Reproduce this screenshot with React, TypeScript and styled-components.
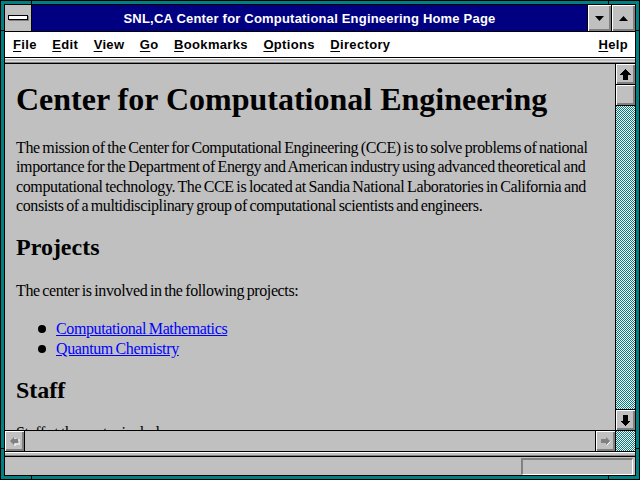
import React from "react";
import styled, { createGlobalStyle } from "styled-components";

const Global = createGlobalStyle`
  html, body { margin: 0; padding: 0; background: #008080; }
  * { box-sizing: border-box; }
`;

const Frame = styled.div`
  position: relative;
  width: 640px;
  height: 480px;
  background: #008080;
  border: 1px solid #000;
  padding: 3px;
`;

const Tick = styled.div<{ $v?: boolean }>`
  position: absolute;
  background: #000;
  ${(p) => (p.$v ? "width: 1px; height: 4px;" : "width: 4px; height: 1px;")}
`;

const Inner = styled.div`
  height: 100%;
  border: 1px solid #000;
  background: #c0c0c0;
  display: flex;
  flex-direction: column;
`;

const TitleBar = styled.div`
  height: 27px;
  display: flex;
  border-bottom: 1px solid #000;
  background: #000080;
`;

const SysBox = styled.div`
  width: 27px;
  background: #c0c0c0;
  border-right: 1px solid #000;
  display: flex;
  align-items: center;
  justify-content: center;
`;

const SysBar = styled.div`
  width: 20px;
  height: 5px;
  background: #fff;
  border: 1px solid #000;
  box-shadow: 1px 1px 0 #808080;
  margin-top: -1px;
`;

const Title = styled.div`
  flex: 1;
  color: #fff;
  font-family: "Liberation Sans", Arial, sans-serif;
  font-weight: bold;
  font-size: 13px;
  display: flex;
  align-items: center;
  justify-content: center;
  letter-spacing: 0.2px;
`;

const TitleBtn = styled.div`
  width: 24px;
  background: #c0c0c0;
  border-left: 1px solid #000;
  box-shadow: inset 1px 1px 0 #fff, inset -1px -1px 0 #808080, inset -2px -2px 0 #808080;
  display: flex;
  align-items: center;
  justify-content: center;
`;

const MenuBar = styled.div`
  height: 26px;
  background: #fff;
  border-bottom: 1px solid #000;
  display: flex;
  align-items: center;
  padding: 0 8px;
  gap: 15.5px;
  font-family: "Liberation Sans", Arial, sans-serif;
  font-weight: bold;
  font-size: 13px;
  letter-spacing: 0.33px;
  color: #000;
`;

const MenuItem = styled.span<{ $right?: boolean }>`
  margin-left: ${(p) => (p.$right ? "auto" : "0")};
  margin-right: ${(p) => (p.$right ? "-1px" : "0")};
  & u { text-decoration: underline; text-underline-offset: 2px; }
`;

const Separator = styled.div`
  height: 6px;
  border-top: 1px solid #fff;
  border-bottom: 1px solid #000;
  background: linear-gradient(#c0c0c0 0 2px, #dcdcdc 2px 3px, #808080 3px);
`;

const Main = styled.div`
  height: 366px;
  display: flex;
`;

const Content = styled.div`
  flex: 1;
  overflow: hidden;
  padding: 17px 0 0 11px;
  font-family: "Liberation Serif", "Times New Roman", serif;
  color: #000;
`;

const H1 = styled.h1`
  margin: 0 0 21px;
  font-size: 32px;
  line-height: 36px;
  font-weight: bold;
  white-space: nowrap;
`;

const H2 = styled.h2<{ $mt?: number }>`
  margin: ${(p) => p.$mt ?? 0}px 0 0;
  font-size: 24px;
  line-height: 28px;
  font-weight: bold;
`;

const bodyText = `
  font-size: 16px;
  letter-spacing: -0.38px;
  word-spacing: -1px;
`;

const P = styled.p<{ $mt?: number }>`
  margin: ${(p) => p.$mt ?? 0}px 0 0;
  ${bodyText}
  line-height: 19.4px;
  white-space: nowrap;
`;

const List = styled.ul`
  margin: 19px 0 17px;
  padding: 0 0 0 22px;
  list-style: none;
`;

const Li = styled.li`
  ${bodyText}
  line-height: 20px;
  display: flex;
  align-items: center;
  gap: 10px;
  &::before {
    content: "";
    width: 8px;
    height: 8px;
    border-radius: 50%;
    background: #000;
    margin-top: -1px;
  }
`;

const Link = styled.a`
  color: #0000ff;
  text-decoration: underline;
`;

const VScroll = styled.div`
  width: 20px;
  border-left: 1px solid #000;
  display: flex;
  flex-direction: column;
`;

const Dither = styled.svg`
  display: block;
  flex: 1;
  width: 100%;
  height: 100%;
  min-height: 0;
`;

const DitherFill = ({ id }: { id: string }) => (
  <Dither shapeRendering="crispEdges" preserveAspectRatio="none">
    <defs>
      <pattern id={id} width="2" height="2" patternUnits="userSpaceOnUse">
        <rect width="2" height="2" fill="#fff" />
        <rect width="1" height="1" fill="#008080" />
        <rect x="1" y="1" width="1" height="1" fill="#008080" />
      </pattern>
    </defs>
    <rect width="100%" height="100%" fill={`url(#${id})`} />
  </Dither>
);

const SBtn = styled.div<{ $top?: boolean; $bottom?: boolean; $left?: boolean; $right?: boolean; $w?: number; $h?: number }>`
  flex: none;
  width: ${(p) => (p.$w ? p.$w + "px" : "auto")};
  height: ${(p) => (p.$h ? p.$h + "px" : "auto")};
  background: #c0c0c0;
  box-shadow: inset 1px 1px 0 #fff, inset -1px -1px 0 #808080, inset -2px -2px 0 #808080;
  border-top: ${(p) => (p.$top ? "1px solid #000" : "none")};
  border-bottom: ${(p) => (p.$bottom ? "1px solid #000" : "none")};
  border-left: ${(p) => (p.$left ? "1px solid #000" : "none")};
  border-right: ${(p) => (p.$right ? "1px solid #000" : "none")};
  display: flex;
  align-items: center;
  justify-content: center;
`;

const HScroll = styled.div`
  height: 21px;
  border-top: 1px solid #000;
  display: flex;
`;

const HTrack = styled.div`
  flex: 1;
  background: #c0c0c0;
`;

const Corner = styled.div`
  width: 20px;
  border-left: 1px solid #000;
  display: flex;
`;

const StatusSep = styled.div`
  height: 6px;
  border-top: 1px solid #000;
  border-bottom: 1px solid #000;
  background: linear-gradient(#fff 0 1px, #c0c0c0 1px 3px, #808080 3px);
`;

const Status = styled.div`
  flex: 1;
  display: flex;
  justify-content: flex-end;
  align-items: center;
  padding-right: 2px;
`;

const StatusBox = styled.div`
  width: 112px;
  height: 17px;
  border-top: 2px solid #808080;
  border-left: 2px solid #808080;
  border-bottom: 1px solid #fff;
  border-right: 1px solid #fff;
  margin-top: 1px;
`;

const ArrowUp = () => (
  <svg width="11" height="11" viewBox="0 0 11 11" shapeRendering="crispEdges">
    <path d="M5.5 0 L11 5.5 L8 5.5 L8 11 L3 11 L3 5.5 L0 5.5 Z" fill="#000" />
  </svg>
);
const ArrowDown = () => (
  <svg width="11" height="11" viewBox="0 0 11 11" shapeRendering="crispEdges">
    <path d="M5.5 11 L11 5.5 L8 5.5 L8 0 L3 0 L3 5.5 L0 5.5 Z" fill="#000" />
  </svg>
);
const ArrowLeftG = () => (
  <svg width="11" height="10" viewBox="0 0 11 10">
    <path d="M5 1 L5 3 L10 3 L10 7 L5 7 L5 9" fill="none" stroke="#fff" strokeWidth="1" transform="translate(1,1)" />
    <path d="M5 1 L1 5 L5 9 L5 7 L9 7 L9 3 L5 3 Z" fill="#808080" />
  </svg>
);
const ArrowRightG = () => (
  <svg width="11" height="10" viewBox="0 0 11 10">
    <path d="M6 9 L10 5" stroke="#fff" strokeWidth="1" transform="translate(0.5,0.5)" />
    <path d="M6 1 L10 5 L6 9 L6 7 L1 7 L1 3 L6 3 Z" fill="#808080" />
  </svg>
);
const TriDown = () => (
  <svg width="9" height="5" viewBox="0 0 9 5">
    <path d="M0 0 L9 0 L4.5 5 Z" fill="#000" />
  </svg>
);
const TriUp = () => (
  <svg width="9" height="5" viewBox="0 0 9 5">
    <path d="M0 5 L9 5 L4.5 0 Z" fill="#000" />
  </svg>
);

export default function App() {
  return (
    <>
      <Global />
      <Frame>
        <Tick $v style={{ left: 30, top: 0 }} />
        <Tick $v style={{ left: 607, top: 0 }} />
        <Tick $v style={{ left: 30, bottom: 0 }} />
        <Tick $v style={{ left: 607, bottom: 0 }} />
        <Tick style={{ left: 0, top: 29 }} />
        <Tick style={{ right: 0, top: 29 }} />
        <Tick style={{ left: 0, top: 447 }} />
        <Tick style={{ right: 0, top: 447 }} />
        <Inner>
          <TitleBar>
            <SysBox>
              <SysBar />
            </SysBox>
            <Title>SNL,CA Center for Computational Engineering Home Page</Title>
            <TitleBtn>
              <TriDown />
            </TitleBtn>
            <TitleBtn>
              <TriUp />
            </TitleBtn>
          </TitleBar>
          <MenuBar>
            <MenuItem><u>F</u>ile</MenuItem>
            <MenuItem><u>E</u>dit</MenuItem>
            <MenuItem><u>V</u>iew</MenuItem>
            <MenuItem><u>G</u>o</MenuItem>
            <MenuItem><u>B</u>ookmarks</MenuItem>
            <MenuItem><u>O</u>ptions</MenuItem>
            <MenuItem><u>D</u>irectory</MenuItem>
            <MenuItem $right><u>H</u>elp</MenuItem>
          </MenuBar>
          <Separator />
          <Main>
            <Content>
              <H1>Center for Computational Engineering</H1>
              <P>
                The mission of the Center for Computational Engineering (CCE) is to solve problems of national
                <br />
                importance for the Department of Energy and American industry using advanced theoretical and
                <br />
                computational technology. The CCE is located at Sandia National Laboratories in California and
                <br />
                consists of a multidisciplinary group of computational scientists and engineers.
              </P>
              <H2 $mt={17}>Projects</H2>
              <P $mt={20}>The center is involved in the following projects:</P>
              <List>
                <Li><Link href="#">Computational Mathematics</Link></Li>
                <Li><Link href="#">Quantum Chemistry</Link></Li>
              </List>
              <H2>Staff</H2>
              <P $mt={19}>Staff at the center include:</P>
            </Content>
            <VScroll>
              <SBtn $h={21} $bottom><ArrowUp /></SBtn>
              <SBtn $h={21} $bottom />
              <DitherFill id="dv" />
              <SBtn $h={21} $top><ArrowDown /></SBtn>
            </VScroll>
          </Main>
          <HScroll>
            <SBtn $w={20} $right><ArrowLeftG /></SBtn>
            <HTrack />
            <SBtn $w={20} $left><ArrowRightG /></SBtn>
            <Corner>
              <DitherFill id="dc" />
            </Corner>
          </HScroll>
          <StatusSep />
          <Status>
            <StatusBox />
          </Status>
        </Inner>
      </Frame>
    </>
  );
}
